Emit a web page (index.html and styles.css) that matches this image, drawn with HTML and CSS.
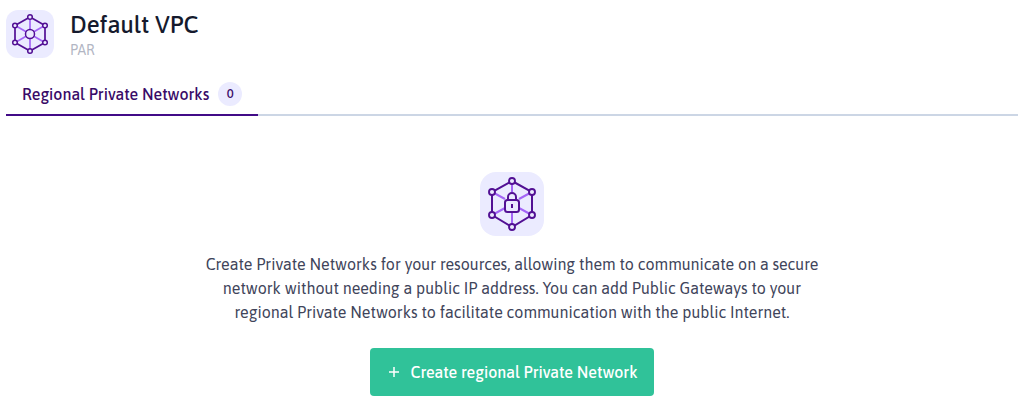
FILE: index.html
```html
<!DOCTYPE html>
<html lang="en">
<head>
<meta charset="utf-8">
<title>Default VPC</title>
<link rel="stylesheet" href="styles.css">
</head>
<body>
<header class="header">
  <svg class="header-icon" viewBox="0 0 48 48" fill="none" aria-hidden="true">
    <rect width="48" height="48" rx="12" fill="#ebebff"/>
    <path d="M24 9v11M24 28v11M11 16.500l9.500 5.500M37 16.500L27.500 22M11 31.500l9.500-5.500M37 31.500L27.500 26" stroke="#a365f6" stroke-width="1.700"/>
    <path d="M24 7l15 8.500v17L24 41 9 32.500v-17z" stroke="#521094" stroke-width="1.700"/>
    <g fill="#ebebff" stroke="#521094" stroke-width="1.500">
      <circle cx="24" cy="24" r="4.500"/>
      <circle cx="24" cy="7" r="2.300"/><circle cx="39" cy="15.500" r="2.300"/><circle cx="39" cy="32.500" r="2.300"/>
      <circle cx="24" cy="41" r="2.300"/><circle cx="9" cy="32.500" r="2.300"/><circle cx="9" cy="15.500" r="2.300"/>
    </g>
  </svg>
  <div>
    <h1 class="title">Default VPC</h1>
    <p class="region">PAR</p>
  </div>
</header>
<nav class="tabs" role="tablist">
  <button class="tab" type="button" role="tab" aria-selected="true">Regional Private Networks <span class="badge">0</span></button>
</nav>
<main class="empty">
  <svg class="empty-icon" viewBox="0 0 64 64" fill="none" aria-hidden="true">
    <rect width="64" height="64" rx="16" fill="#ebebff"/>
    <path d="M32 11v9M32 41v12M14 21l11 6M50 21l-11 6M14 42l11-6M50 42l-11-6" stroke="#a365f6" stroke-width="2"/>
    <path d="M32 9l20 11v23L32 55 12 43V20z" stroke="#521094" stroke-width="2"/>
    <path d="M28 28v-3a4 4 0 0 1 8 0v3" fill="#ebebff" stroke="#521094" stroke-width="2"/>
    <rect x="25" y="28" width="14" height="12" rx="2.500" fill="#ebebff" stroke="#521094" stroke-width="2"/>
    <path d="M32 32v4" stroke="#521094" stroke-width="2"/>
    <g fill="#ebebff" stroke="#521094" stroke-width="1.900">
      <circle cx="32" cy="9" r="3"/><circle cx="52" cy="20" r="3"/><circle cx="52" cy="43" r="3"/>
      <circle cx="32" cy="55" r="3"/><circle cx="12" cy="43" r="3"/><circle cx="12" cy="20" r="3"/>
    </g>
  </svg>
  <p class="message">Create Private Networks for your resources, allowing them to communicate on a secure network without needing a public IP address. You can add Public Gateways to your regional Private Networks to facilitate communication with the public Internet.</p>
  <button class="create" type="button">
    <svg class="plus" viewBox="0 0 16 16" fill="none" aria-hidden="true"><path d="M8 3v10M3 8h10" stroke="currentColor" stroke-width="1.500"/></svg>
    Create regional Private Network
  </button>
</main>
</body>
</html>
```
FILE: styles.css
```css
* {
  box-sizing: border-box;
}

body {
  margin: 0;
  padding: 9px 5px 16px 6px;
  background: #fff;
  font-family: Asap, Lato, sans-serif;
  font-size: 16px;
  line-height: 24px;
}

.header {
  display: flex;
  align-items: center;
  gap: 16px;
}

.header-icon {
  flex: none;
  width: 48px;
  height: 48px;
}

.title {
  margin: 0;
  color: #151a2d;
  font-size: 24px;
  font-weight: 500;
  line-height: 32px;
}

.region {
  margin: 0;
  color: #b2b6c3;
  font-size: 14px;
  line-height: 18px;
}

.tabs {
  display: flex;
  margin-top: 13px;
  border-bottom: 2px solid #ccd6e5;
}

.tab {
  display: flex;
  align-items: center;
  gap: 9px;
  margin-bottom: -2px;
  padding: 10px 16px 8px;
  border: 0;
  border-bottom: 2px solid #410b87;
  background: none;
  color: #390b68;
  font: 500 16px/24px Asap, Lato, sans-serif;
}

.badge {
  width: 24px;
  border-radius: 12px;
  background: #ebebff;
  font-size: 13px;
  text-align: center;
}

.empty {
  display: flex;
  flex-direction: column;
  align-items: center;
  padding-top: 56px;
}

.empty-icon {
  width: 64px;
  height: 64px;
}

.message {
  max-width: 640px;
  margin: 16px 0 24px;
  color: #40445a;
  text-align: center;
}

.create {
  display: flex;
  align-items: center;
  gap: 8px;
  padding: 12px 16px;
  border: 0;
  border-radius: 4px;
  background: #30c299;
  color: #fff;
  font: 500 16px/24px Asap, Lato, sans-serif;
}

.plus {
  width: 16px;
  height: 16px;
}
```
